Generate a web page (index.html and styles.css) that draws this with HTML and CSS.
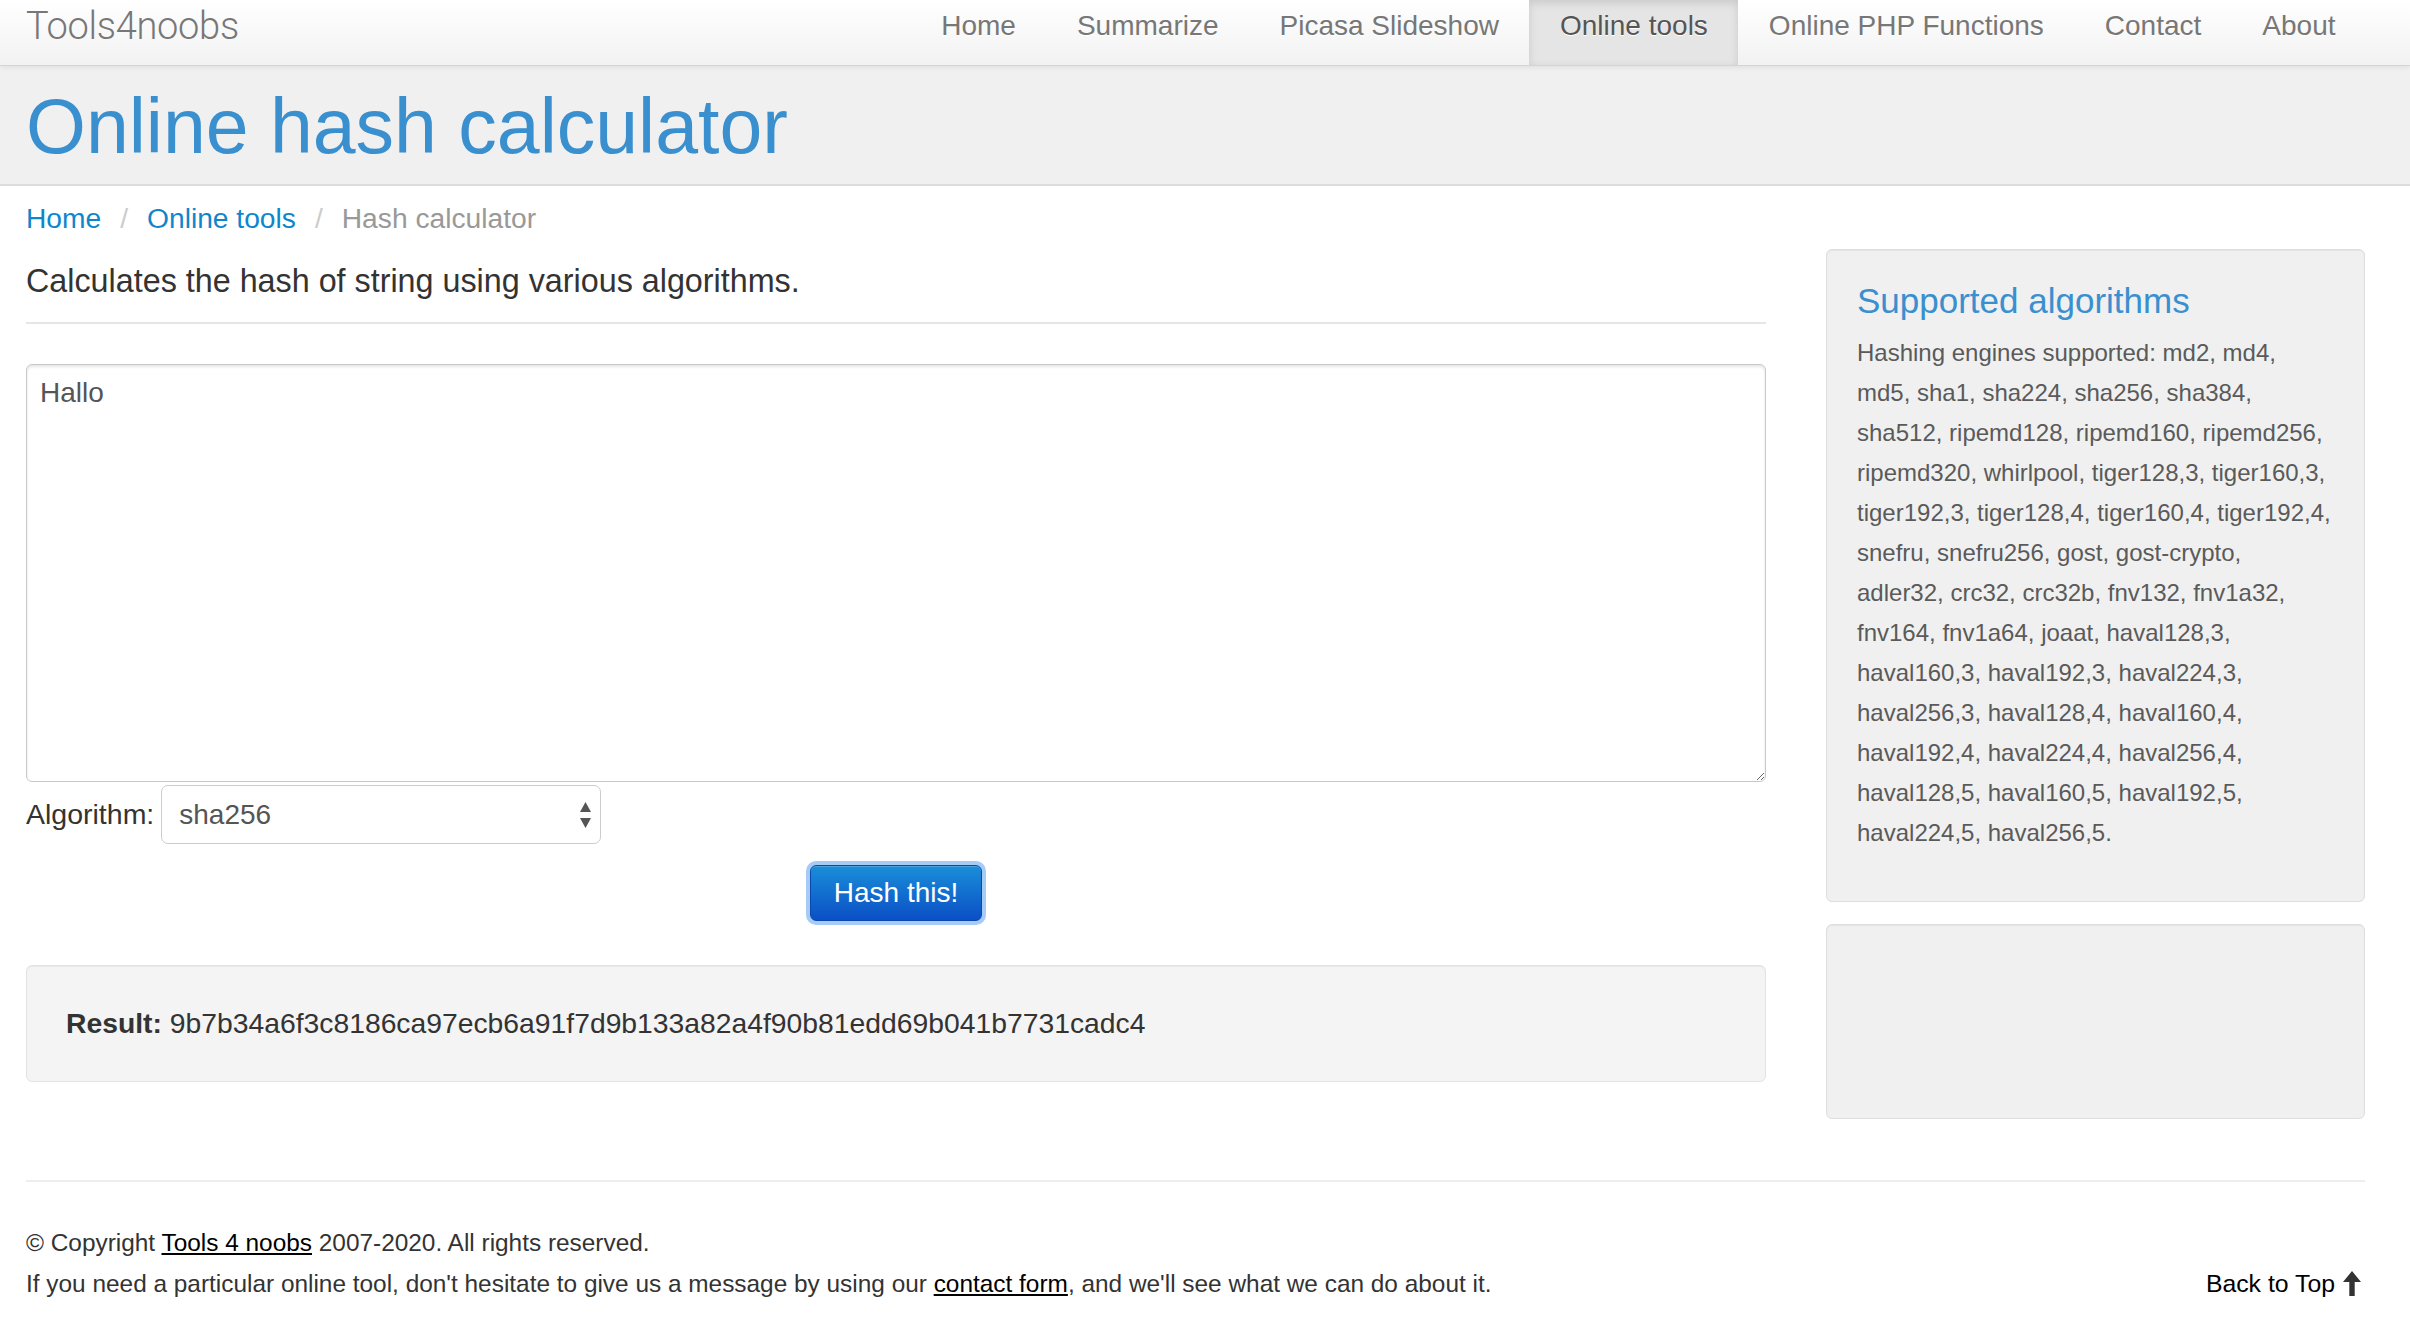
FILE: index.html
```html
<!DOCTYPE html>
<html lang="en">
<head>
<meta charset="utf-8">
<title>Online hash calculator</title>
<link rel="stylesheet" href="styles.css">
</head>
<body>
<header class="navbar">
  <a class="brand" href="#">Tools4noobs</a>
  <ul class="nav">
    <li><a href="#">Home</a></li>
    <li><a href="#">Summarize</a></li>
    <li><a href="#">Picasa Slideshow</a></li>
    <li class="active"><a href="#">Online tools</a></li>
    <li><a href="#">Online PHP Functions</a></li>
    <li><a href="#">Contact</a></li>
    <li><a href="#">About</a></li>
  </ul>
</header>
<div class="page-header">
  <h1>Online hash calculator</h1>
</div>
<div class="container">
  <ul class="breadcrumb">
    <li><a href="#">Home</a><span class="divider">/</span></li>
    <li><a href="#">Online tools</a><span class="divider">/</span></li>
    <li class="current">Hash calculator</li>
  </ul>
  <div class="row">
    <main class="main">
      <p class="lead">Calculates the hash of string using various algorithms.</p>
      <hr class="sep">
      <form class="hash-form">
        <textarea class="input-text">Hallo</textarea>
        <div class="algo-row">
          <label class="algo-label">Algorithm:</label>
          <div class="select-wrap">
            <select class="algo-select">
              <option>sha256</option>
            </select>
            <svg class="select-arrows" width="11" height="26" viewBox="0 0 11 26"><path d="M5.5 0 L11 10 H0 Z M5.5 26 L11 16 H0 Z" fill="#555"/></svg>
          </div>
        </div>
        <div class="actions">
          <button type="button" class="btn-primary">Hash this!</button>
        </div>
      </form>
      <div class="result"><span><b>Result:</b> 9b7b34a6f3c8186ca97ecb6a91f7d9b133a82a4f90b81edd69b041b7731cadc4</span></div>
    </main>
    <aside class="side">
      <div class="well algos">
        <h3 class="well-title">Supported algorithms</h3>
        <p class="well-text">Hashing engines supported: md2, md4,<br>md5, sha1, sha224, sha256, sha384,<br>sha512, ripemd128, ripemd160, ripemd256,<br>ripemd320, whirlpool, tiger128,3, tiger160,3,<br>tiger192,3, tiger128,4, tiger160,4, tiger192,4,<br>snefru, snefru256, gost, gost-crypto,<br>adler32, crc32, crc32b, fnv132, fnv1a32,<br>fnv164, fnv1a64, joaat, haval128,3,<br>haval160,3, haval192,3, haval224,3,<br>haval256,3, haval128,4, haval160,4,<br>haval192,4, haval224,4, haval256,4,<br>haval128,5, haval160,5, haval192,5,<br>haval224,5, haval256,5.</p>
      </div>
      <div class="well empty"></div>
    </aside>
  </div>
  <footer class="footer">
    <p class="foot-line">© Copyright <a href="#">Tools 4 noobs</a> 2007-2020. All rights reserved.</p>
    <div class="foot-line foot-row">
      <span>If you need a particular online tool, don't hesitate to give us a message by using our <a href="#">contact form</a>, and we'll see what we can do about it.</span>
      <a class="back-top" href="#">Back to Top <svg width="18" height="25" viewBox="0 0 18 25"><path d="M9 0 L18 11 H11.7 V25 H6.3 V11 H0 Z" fill="#333"/></svg></a>
    </div>
  </footer>
</div>
</body>
</html>
```

FILE: styles.css
```css
html, body {
  margin: 0;
  padding: 0;
}
body {
  font-family: "Liberation Sans", Arial, Helvetica, sans-serif;
  font-size: 28px;
  color: #333;
  background: #fff;
}

/* Navbar */
.navbar {
  position: relative;
  z-index: 2;
  height: 65px;
  border-bottom: 1px solid #d4d4d4;
  background: linear-gradient(#ffffff, #f2f2f2);
  box-shadow: 0 1px 6px rgba(0, 0, 0, 0.08);
  display: flex;
  justify-content: space-between;
  align-items: flex-start;
  padding: 0 44px 0 26px;
}
.brand {
  font-family: Roboto, "Liberation Sans", sans-serif;
  font-weight: 300;
  font-size: 38px;
  line-height: 52px;
  color: #777;
  text-decoration: none;
  letter-spacing: -0.3px;
}
.nav {
  list-style: none;
  margin: 0;
  padding: 0;
  display: flex;
}
.nav a {
  display: block;
  box-sizing: border-box;
  height: 65px;
  padding: 10px 30.5px 0;
  line-height: 32px;
  font-size: 28px;
  color: #777;
  text-decoration: none;
  text-shadow: 0 1px 0 #fff;
}
.nav .active a {
  background: #e5e5e5;
  color: #555;
  box-shadow: inset 0 3px 8px rgba(0, 0, 0, 0.125);
}

/* Page header */
.page-header {
  background: #f0f0f0;
  border-bottom: 2px solid #dcdcdc;
  padding: 15px 26px 13px;
}
.page-header h1 {
  margin: 0;
  font-size: 77px;
  line-height: 90px;
  font-weight: normal;
  color: #3a8fcf;
}

/* Container */
.container {
  margin-left: 26px;
  width: 2339px;
  padding-bottom: 30px;
}
.breadcrumb {
  list-style: none;
  margin: 12px 0 11px;
  padding: 0;
  display: flex;
  font-size: 28.2px;
  line-height: 40px;
}
.breadcrumb a {
  color: #0f86cc;
  text-decoration: none;
}
.breadcrumb .divider {
  color: #ccc;
  padding: 0 19px;
}
.breadcrumb .current {
  color: #999;
}

.row {
  display: flex;
  align-items: flex-start;
  gap: 60px;
}
.main {
  width: 1740px;
}
.side {
  width: 539px;
}

.lead {
  margin: 10px 0 0;
  font-size: 32.3px;
  line-height: 44px;
  color: #333;
}
.sep {
  border: 0;
  border-top: 2px solid #e6e6e6;
  margin: 19px 0 0;
  height: 0;
}
.hash-form {
  margin: 0;
}
.input-text {
  display: block;
  box-sizing: border-box;
  width: 1740px;
  height: 418px;
  margin-top: 40px;
  border: 1px solid #c8c8c8;
  border-radius: 6px;
  padding: 11px 13px;
  font-family: "Liberation Sans", Arial, sans-serif;
  font-size: 28px;
  line-height: 34px;
  color: #555;
  box-shadow: inset 0 2px 3px rgba(0, 0, 0, 0.1);
  resize: vertical;
}
.algo-row {
  display: flex;
  align-items: center;
  margin-top: 3px;
}
.algo-label {
  margin-right: 7px;
  font-size: 28.5px;
  color: #333;
}
.select-wrap {
  position: relative;
  width: 440px;
  height: 59px;
}
.algo-select {
  -webkit-appearance: none;
  appearance: none;
  box-sizing: border-box;
  width: 100%;
  height: 100%;
  border: 1px solid #ccc;
  border-radius: 7px;
  background: #fff;
  font-family: "Liberation Sans", Arial, sans-serif;
  font-size: 28px;
  color: #555;
  padding: 0 40px 0 17px;
}
.select-arrows {
  position: absolute;
  right: 10px;
  top: 17px;
  pointer-events: none;
}
.actions {
  text-align: center;
  margin-top: 21px;
}
.btn-primary {
  box-sizing: border-box;
  height: 56px;
  padding: 0 23px;
  border: 1px solid #0b47b3;
  border-radius: 6px;
  background: linear-gradient(#1a8ed8, #0b4fc6);
  color: #fff;
  font-family: "Liberation Sans", Arial, sans-serif;
  font-size: 28px;
  line-height: 54px;
  box-shadow: inset 0 1px 0 rgba(255, 255, 255, 0.2), 0 0 0 4px #a6cbf5;
  cursor: pointer;
}
.result {
  box-sizing: border-box;
  height: 117px;
  margin-top: 44px;
  display: flex;
  align-items: center;
  padding: 0 39px;
  background: #f4f4f4;
  border: 1px solid #e3e3e3;
  border-radius: 6px;
  box-shadow: inset 0 1px 1px rgba(0, 0, 0, 0.05);
  font-size: 28.3px;
  color: #333;
}

/* Sidebar wells */
.well {
  background: #f0f0f0;
  border: 1px solid #dedede;
  border-radius: 6px;
  box-shadow: inset 0 1px 1px rgba(0, 0, 0, 0.05);
}
.algos {
  padding: 29px 20px 48px 30px;
}
.well-title {
  margin: 0;
  font-size: 35px;
  line-height: 44px;
  font-weight: normal;
  color: #3a8fcf;
}
.well-text {
  margin: 10px 0 0;
  font-size: 24px;
  line-height: 40px;
  color: #5a5a5a;
  white-space: nowrap;
}
.empty {
  box-sizing: border-box;
  height: 195px;
  margin-top: 22px;
}

/* Footer */
.footer {
  margin-top: 61px;
  border-top: 2px solid #eee;
  padding-top: 40px;
  font-size: 24.4px;
  line-height: 41px;
  color: #333;
}
.foot-line {
  margin: 0;
}
.footer a {
  color: #000;
  text-decoration: underline;
}
.foot-row {
  display: flex;
  justify-content: space-between;
  align-items: center;
}
.footer .back-top {
  display: flex;
  align-items: center;
  gap: 8px;
  color: #000;
  text-decoration: none;
  margin-right: 4px;
  font-size: 24.8px;
}
```
